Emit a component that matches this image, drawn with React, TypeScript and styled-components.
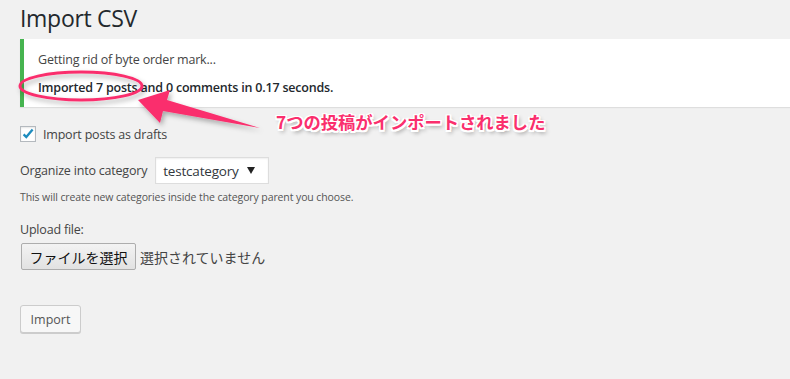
import React from 'react';
import styled, { createGlobalStyle } from 'styled-components';

const GlobalStyle = createGlobalStyle`
  html, body {
    margin: 0;
    padding: 0;
    background: #f1f1f1;
  }
  body {
    font-family: "Open Sans", "Noto Sans CJK JP", sans-serif;
    font-size: 13px;
    color: #444;
    width: 790px;
    height: 379px;
    overflow: hidden;
  }
`;

const PINK = '#fa2f6d';

const Page = styled.div`
  position: relative;
  width: 790px;
  height: 379px;
`;

const Wrap = styled.div`
  padding-left: 20px;
  display: flex;
  flex-direction: column;
`;

const Title = styled.h1`
  margin: 0;
  padding: 4px 0 6px;
  font-size: 23px;
  line-height: 29px;
  font-weight: 400;
  color: #23282d;
  letter-spacing: -0.3px;
`;

const Notice = styled.div`
  background: #fff;
  border-left: 4px solid #46b450;
  box-shadow: 0 1px 1px rgba(0, 0, 0, 0.08);
  padding: 11px 14px 9px;
  display: flex;
  flex-direction: column;
  gap: 8px;
`;

const NoticeLine = styled.p<{ $strong?: boolean }>`
  margin: 0;
  line-height: 20px;
  font-size: 12.5px;
  color: ${p => (p.$strong ? '#23282d' : '#444')};
  font-weight: ${p => (p.$strong ? 600 : 400)};
  letter-spacing: -0.2px;
`;

const Form = styled.div`
  display: flex;
  flex-direction: column;
`;

const CheckRow = styled.label`
  display: flex;
  align-items: center;
  gap: 7px;
  margin-top: 19px;
  height: 16px;
  font-size: 12.5px;
  letter-spacing: -0.2px;
`;

const Box = styled.span`
  width: 16px;
  height: 16px;
  box-sizing: border-box;
  border: 1px solid #b4b9be;
  background: #fff;
  box-shadow: inset 0 1px 2px rgba(0, 0, 0, 0.1);
  display: flex;
  align-items: center;
  justify-content: center;
`;

const SelectRow = styled.div`
  display: flex;
  align-items: center;
  gap: 8px;
  margin-top: 15px;
  font-size: 12.5px;
  letter-spacing: -0.2px;
`;

const Select = styled.div`
  width: 114px;
  height: 27px;
  box-sizing: border-box;
  border: 1px solid #ddd;
  background: #fff;
  box-shadow: inset 0 1px 2px rgba(0, 0, 0, 0.07);
  display: flex;
  align-items: center;
  justify-content: space-between;
  padding: 0 13px 0 7px;
  font-size: 13.5px;
  color: #32373c;
`;

const Caret = styled.span`
  width: 0;
  height: 0;
  border-left: 4px solid transparent;
  border-right: 4px solid transparent;
  border-top: 7px solid #222;
`;

const Help = styled.p`
  margin: 5px 0 0;
  font-size: 10.5px;
  line-height: 16px;
  color: #555;
  letter-spacing: -0.1px;
`;

const Label = styled.p`
  margin: 17px 0 0;
  font-size: 12.5px;
  line-height: 16px;
  letter-spacing: -0.2px;
`;

const FileRow = styled.div`
  display: flex;
  align-items: center;
  gap: 4px;
  margin-top: 5px;
  font-family: "Noto Sans CJK JP", sans-serif;
  font-size: 14px;
`;

const FileButton = styled.button`
  width: 115px;
  height: 27px;
  margin-left: 1px;
  padding: 0;
  border: 1px solid #adadad;
  border-radius: 2px;
  background: linear-gradient(#f3f3f3, #e2e2e2);
  font-family: "Noto Sans CJK JP", sans-serif;
  font-size: 14px;
  color: #111;
`;

const NoFile = styled.span`
  color: #444;
`;

const ImportButton = styled.button`
  align-self: flex-start;
  margin-top: 35px;
  width: 61px;
  height: 28px;
  padding: 0;
  border: 1px solid #ccc;
  border-radius: 3px;
  background: #f7f7f7;
  box-shadow: 0 1px 0 #ccc;
  font-family: "Open Sans", sans-serif;
  font-size: 12.5px;
  color: #555;
`;

const Overlay = styled.svg`
  position: absolute;
  left: 0;
  top: 0;
  pointer-events: none;
`;

const Callout = styled.span`
  position: absolute;
  left: 276px;
  top: 110px;
  font-family: "Noto Sans CJK JP", sans-serif;
  font-weight: 700;
  font-size: 17.3px;
  line-height: 24px;
  color: ${PINK};
  white-space: nowrap;
  text-shadow:
    -1.5px -1.5px 0 #fff, 1.5px -1.5px 0 #fff, -1.5px 1.5px 0 #fff, 1.5px 1.5px 0 #fff,
    0 -1.5px 0 #fff, 0 1.5px 0 #fff, -1.5px 0 0 #fff, 1.5px 0 0 #fff,
    2px 3px 4px rgba(0, 0, 0, 0.45);
`;

export default function App() {
  return (
    <Page>
      <GlobalStyle />
      <Wrap>
        <Title>Import CSV</Title>
        <Notice>
          <NoticeLine>Getting rid of byte order mark...</NoticeLine>
          <NoticeLine $strong>Imported 7 posts and 0 comments in 0.17 seconds.</NoticeLine>
        </Notice>
        <Form>
          <CheckRow>
            <Box>
              <svg width="14" height="14" viewBox="0 0 14 14">
                <path d="M2.6 7.4 L5.3 10.1 L11.6 2.6" fill="none" stroke="#1e8cbe" strokeWidth="2.3" />
              </svg>
            </Box>
            Import posts as drafts
          </CheckRow>
          <SelectRow>
            Organize into category
            <Select>
              testcategory
              <Caret />
            </Select>
          </SelectRow>
          <Help>This will create new categories inside the category parent you choose.</Help>
          <Label>Upload file:</Label>
          <FileRow>
            <FileButton>ファイルを選択</FileButton>
            <NoFile>選択されていません</NoFile>
          </FileRow>
          <ImportButton>Import</ImportButton>
        </Form>
      </Wrap>
      <Overlay width="790" height="379" viewBox="0 0 790 379">
        <defs>
          <filter id="sh" x="-20%" y="-50%" width="140%" height="200%">
            <feDropShadow dx="2" dy="3" stdDeviation="2.5" floodColor="#000" floodOpacity="0.3" />
          </filter>
        </defs>
        <ellipse cx="81" cy="86" rx="61" ry="14" fill="none" stroke={PINK} strokeWidth="3" filter="url(#sh)" />
        <polygon
          points="138,100 170,90 167,100 260,128 163,111 160,123"
          fill={PINK}
          filter="url(#sh)"
        />
      </Overlay>
      <Callout>7つの投稿がインポートされました</Callout>
    </Page>
  );
}
